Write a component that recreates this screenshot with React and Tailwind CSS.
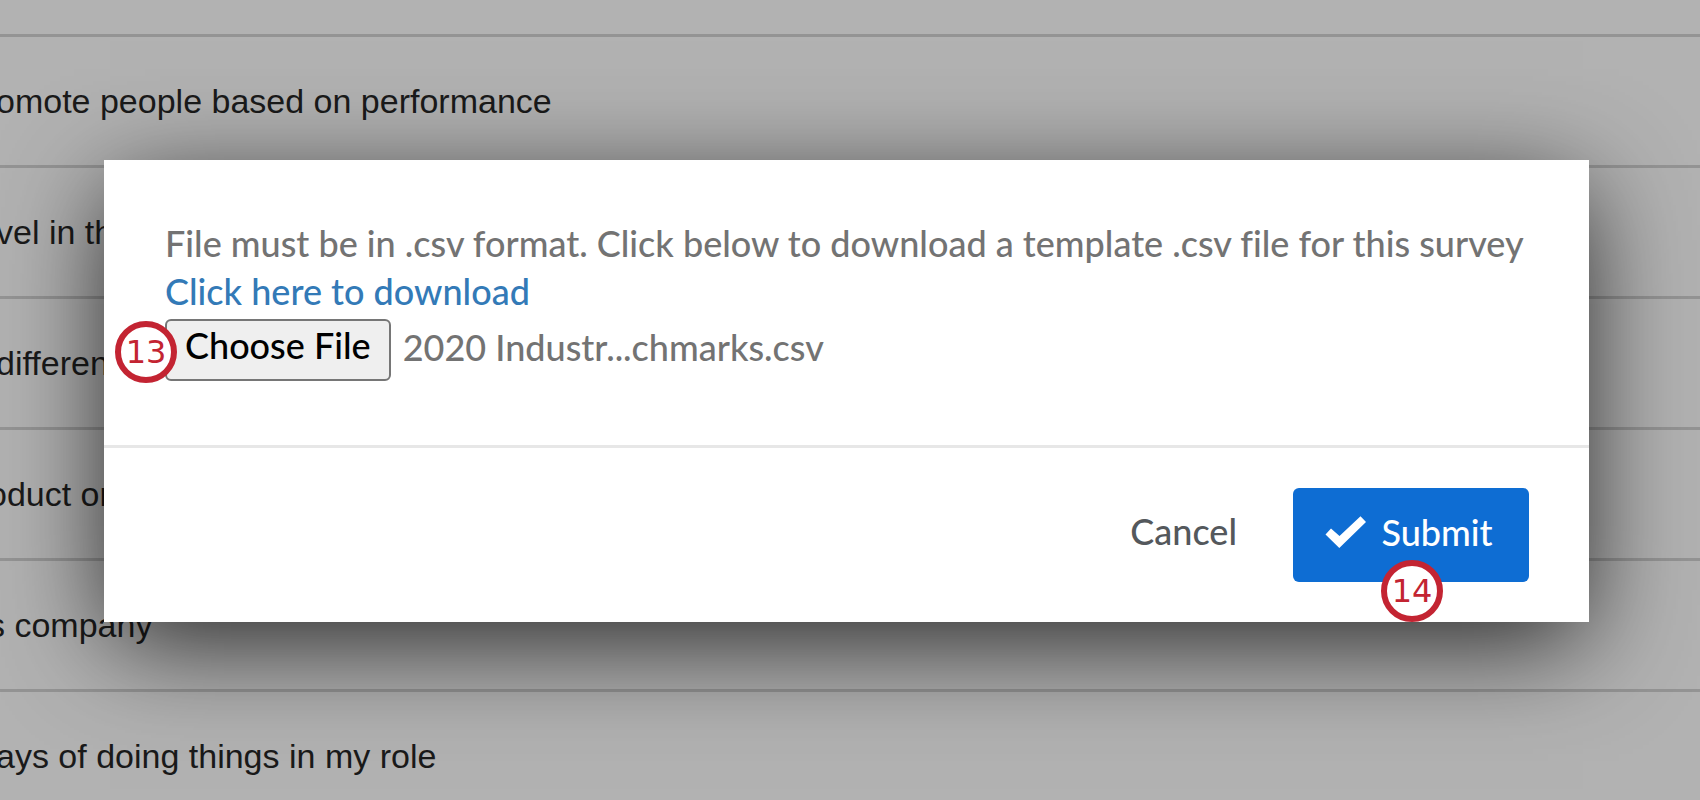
import { useRef } from 'react';

const questions = [
  { text: 'omote people based on performance' },
  { text: 'vel in th' },
  { text: 'differen' },
  { text: 'oduct or', midLetter: true },
  { text: 's company', midLetter: true },
  { text: 'ays of doing things in my role' },
];

function StepBadge({ number, className }) {
  return (
    <span
      className={
        'pointer-events-none absolute flex size-[62px] items-center justify-center rounded-full border-6 border-[#c32432] bg-white font-["DejaVu_Sans",sans-serif] text-[32px] leading-none font-normal text-[#c32432] ' +
        className
      }
    >
      {number}
    </span>
  );
}

function CheckIcon() {
  return (
    <svg viewBox="0 0 42 32" className="h-8 w-[42px]" fill="currentColor" aria-hidden="true">
      <path d="M0.5 18.5 L6 12.5 L14.5 20 L35.5 0.3 L41 6 L14.3 32 Z" />
    </svg>
  );
}

function QuestionList() {
  return (
    <ul className='font-["Liberation_Sans",Arial,sans-serif] text-[34px] text-[#1a1a1a]'>
      <li className="h-[37px] border-b-3 border-[#949494]" />
      {questions.map(({ text, midLetter }) => (
        <li
          key={text}
          className="flex h-[131px] items-center border-b-3 border-[#949494] whitespace-nowrap"
        >
          <span className={midLetter ? '-ml-3' : '-ml-1'}>{text}</span>
        </li>
      ))}
    </ul>
  );
}

function UploadDialog() {
  const fileInput = useRef(null);
  return (
    <div
      role="dialog"
      aria-modal="true"
      aria-label="Upload benchmarks"
      className='w-full bg-white font-["Lato",sans-serif] text-[36px] leading-[48px] font-medium text-[#737373] shadow-[0_24px_100px_-6px_rgba(0,0,0,0.8)] [font-variant-ligatures:none]'
    >
      <div className="px-[61px] pt-[59px] pb-16">
        <p className="whitespace-nowrap">
          File must be in .csv format. Click below to download a template .csv file for this survey
        </p>
        <a href="#template" className="block w-fit text-[#337ab7]">
          Click here to download
        </a>
        <div className="mt-1 flex items-start gap-3">
          <div className="relative">
            <button
              type="button"
              onClick={() => fileInput.current.click()}
              className="block rounded-md border-2 border-[#767676] bg-[#efefef] px-[18px] pb-2.5 text-black"
            >
              Choose File
            </button>
            <StepBadge number="13" className="top-0.5 -left-[50px]" />
          </div>
          <input
            ref={fileInput}
            type="file"
            accept=".csv"
            aria-label="Benchmark file"
            className="hidden"
          />
          <span className="pt-1">2020 Industr...chmarks.csv</span>
        </div>
      </div>
      <div className="flex items-center justify-end gap-14 border-t-3 border-[#e7e7e7] px-[60px] py-10">
        <button type="button" className="pb-2 text-[#54585c]">
          Cancel
        </button>
        <div className="relative">
          <button
            type="button"
            className="flex h-[94px] w-[236px] items-center justify-center gap-3.5 rounded-md bg-[#0e6dd3] pr-1 pb-1.5 text-white"
          >
            <CheckIcon />
            Submit
          </button>
          <StepBadge number="14" className="-bottom-10 left-[88px]" />
        </div>
      </div>
    </div>
  );
}

export default function App() {
  return (
    <main className="relative h-screen overflow-hidden bg-[#b2b2b2]">
      <QuestionList />
      <div className="absolute inset-0 flex items-start pt-40 pr-[111px] pl-[104px]">
        <UploadDialog />
      </div>
    </main>
  );
}
